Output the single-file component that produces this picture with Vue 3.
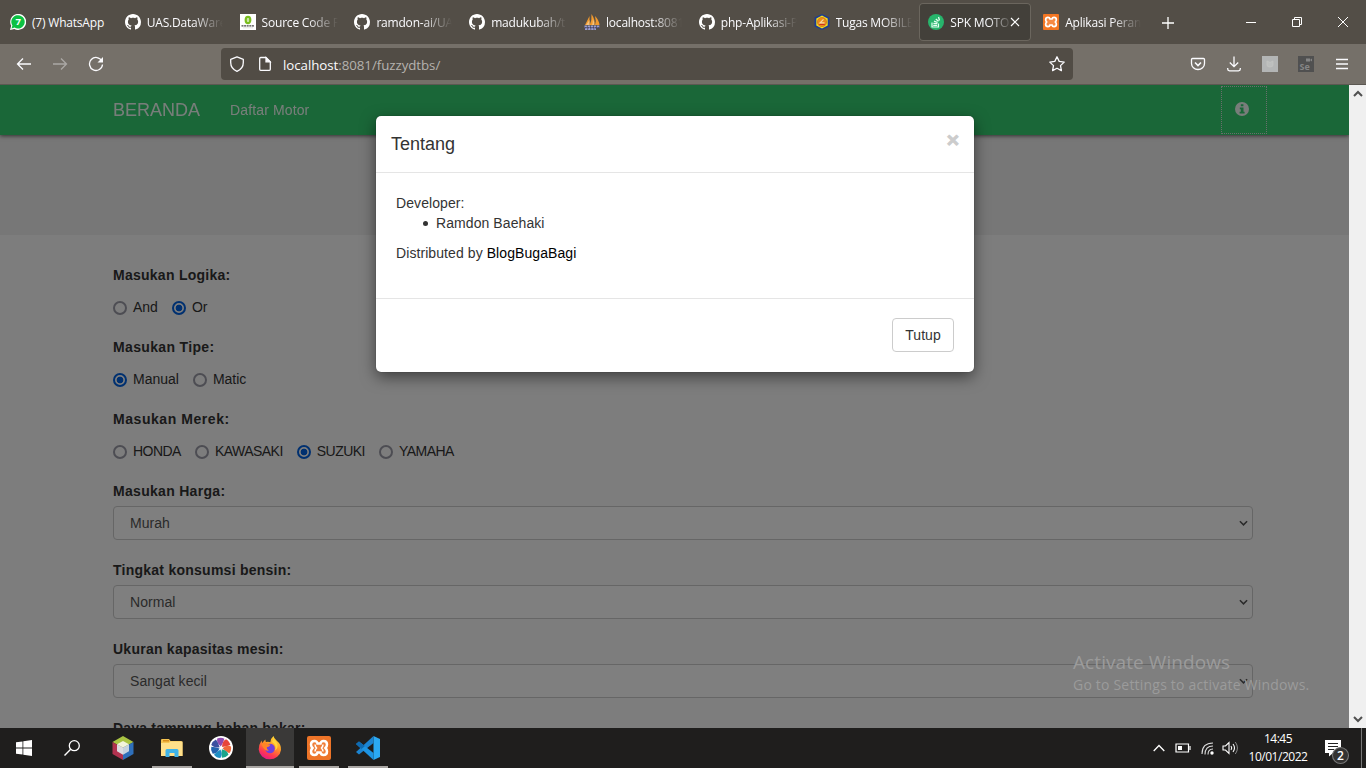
<script setup>
const tabs = [
  { t: '(7) WhatsApp', i: 'wa' },
  { t: 'UAS.DataWare', i: 'gh' },
  { t: 'Source Code F', i: 'src' },
  { t: 'ramdon-ai/UA', i: 'gh' },
  { t: 'madukubah/t', i: 'gh' },
  { t: 'localhost:8081', i: 'pma' },
  { t: 'php-Aplikasi-P', i: 'gh' },
  { t: 'Tugas MOBILE', i: 'uni' },
  { t: 'SPK MOTOR', i: 'spk', active: true },
  { t: 'Aplikasi Peran', i: 'xampp' }
]
const radios = [
  { label: 'Masukan Logika:', options: ['And', 'Or'], value: 'Or', ls: 0.26 },
  { label: 'Masukan Tipe:', options: ['Manual', 'Matic'], value: 'Manual', ls: 0.34 },
  { label: 'Masukan Merek:', options: ['HONDA', 'KAWASAKI', 'SUZUKI', 'YAMAHA'], value: 'SUZUKI', ls: 0.56, caps: true }
]
const selects = [
  { label: 'Masukan Harga:', value: 'Murah', ls: 0.3 },
  { label: 'Tingkat konsumsi bensin:', value: 'Normal', ls: 0.25 },
  { label: 'Ukuran kapasitas mesin:', value: 'Sangat kecil', ls: 0.25 },
  { label: 'Daya tampung bahan bakar:', value: 'Kecil', ls: 0.2 }
]
const blades = ['#8e4bb0', '#e8453c', '#f0683c', '#1ba58a', '#1d8fc4', '#2463ae', '#3c4fa0']
</script>

<template>
  <div class="screen">
    <header class="tabstrip">
      <div v-for="tab in tabs" :key="tab.t" class="tab" :class="{ active: tab.active }">
        <svg class="fav" viewBox="0 0 16 16">
          <g v-if="tab.i === 'wa'">
            <path d="M0 16l1.2-4.2A8 8 0 1 1 4.300 14.900z" fill="#fff" />
            <path d="M1.500 14.500l.9-3A6.700 6.700 0 1 1 4.600 13.600z" fill="#0cc143" />
            <text x="8.100" y="11.400" text-anchor="middle" font-size="9.500" font-weight="700" fill="#fff">7</text>
          </g>
          <path v-else-if="tab.i === 'gh'" fill="#fff" fill-rule="evenodd" d="M8 0C3.580 0 0 3.580 0 8c0 3.540 2.290 6.530 5.470 7.590.4.070.55-.17.55-.38 0-.19-.01-.82-.01-1.490-2.010.37-2.530-.49-2.690-.94-.09-.23-.48-.94-.82-1.130-.28-.15-.68-.52-.01-.53.63-.01 1.080.58 1.230.82.72 1.210 1.870.87 2.330.66.070-.52.28-.87.51-1.070-1.780-.2-3.640-.89-3.640-3.950 0-.87.31-1.590.82-2.150-.08-.2-.36-1.020.08-2.120 0 0 .67-.21 2.200.82.64-.18 1.320-.27 2-.27s1.360.09 2 .27c1.530-1.040 2.200-.82 2.200-.82.44 1.100.16 1.920.08 2.120.51.56.82 1.270.82 2.150 0 3.070-1.870 3.750-3.650 3.950.29.25.54.73.54 1.480 0 1.070-.01 1.930-.01 2.200 0 .21.15.46.55.38A8.010 8.010 0 0 0 16 8c0-4.420-3.580-8-8-8z" />
          <g v-else-if="tab.i === 'src'">
            <rect width="16" height="16" fill="#fff" />
            <ellipse cx="8" cy="6" rx="2.300" ry="3.200" fill="none" stroke="#79bd1e" stroke-width="2.200" />
            <path d="M8 4.500v3" stroke="#79bd1e" stroke-width=".8" />
            <path d="M1.500 11.800h13" stroke="#444" stroke-width="1.300" stroke-dasharray="2 .6" />
            <path d="M3 13.800h10" stroke="#ccc" stroke-width=".6" />
          </g>
          <g v-else-if="tab.i === 'pma'">
            <path d="M1 11L5.500 2v9zM5.700 11Q8 6 7.500 0q4 6 3 11zM11 11q1.500-4 0-9 4 4 4.500 9z" fill="#f29a2e" />
            <path d="M2 11l3.500-5v5zM8 11q1-2 .8-6 2 3 1.500 6z" fill="#f7c37c" />
            <path d="M.5 12.500h15M1 15h11" stroke="#9a9cd0" stroke-width="1.800" stroke-dasharray="2.400 .7" />
            <path d="M1 13.800h14" stroke="#34377c" stroke-width=".9" stroke-dasharray="1.500 1" />
          </g>
          <g v-else-if="tab.i === 'uni'">
            <path d="M8 0l7.500 3.500v9L8 16 .5 12.500v-9z" fill="#1c3c94" />
            <path d="M8 1.600l5.700 3v6.800l-5.700 3-5.700-3V4.600z" fill="#f4e01d" />
            <circle cx="8" cy="8" r="4.600" fill="#e98a1b" stroke="#d0701e" stroke-width=".7" />
            <path d="M9.500 5.300L6 8.800h4.500" fill="none" stroke="#f7d7a8" stroke-width="1.200" />
            <path d="M5.300 10.500h5.400" stroke="#d02e20" stroke-width="1" />
          </g>
          <g v-else-if="tab.i === 'spk'">
            <circle cx="8" cy="8" r="8" fill="#27b56c" />
            <path d="M4 8.500v4.500h6.500V9.500" fill="none" stroke="#e5fff1" stroke-width="1.200" />
            <path d="M5.200 11.300h4M5.400 9.400l4 .3M6 7.200l3.600 1.300M7.800 4.900l2.700 2.400M10.500 3l1 3.500" stroke="#e5fff1" stroke-width="1.300" />
          </g>
          <g v-else>
            <rect width="16" height="16" rx="1" fill="#f37623" />
            <path transform="scale(.667)" d="M7.500 5Q4 5 4 8.500q0 2 1.500 3.500Q4 13.500 4 15.500 4 19 7.500 19q2.500 0 3-2.500h3q.5 2.500 3 2.500 3.500 0 3.500-3.500 0-2-1.500-3.500Q20 10.500 20 8.500 20 5 16.500 5q-2.500 0-3 2.500h-3Q10 5 7.500 5z" fill="#f58a45" stroke="#fff" stroke-width="2.600" />
          </g>
        </svg>
        <span class="tabtext" :class="{ fade: tab.i !== 'wa' }">{{ tab.t }}</span>
        <svg v-if="tab.active" class="tabclose" viewBox="0 0 10 10"><path d="M1 1l8 8M9 1L1 9" stroke="#fff" stroke-width="1.200" /></svg>
      </div>
      <svg class="newtab" viewBox="0 0 12 12"><path d="M6 0v12M0 6h12" stroke="#fff" stroke-width="1.300" /></svg>
      <div class="wincontrols">
        <svg viewBox="0 0 10 10"><path d="M0 5.500h10" stroke="#fff" /></svg>
        <svg viewBox="0 0 10 10"><path d="M.5 2.500h7v7h-7zM2.500 2.500v-2h7v7h-2" fill="none" stroke="#fff" /></svg>
        <svg viewBox="0 0 10 10"><path d="M0 0l10 10M10 0L0 10" stroke="#fff" /></svg>
      </div>
    </header>

    <div class="toolbar">
      <div class="navbtns">
        <svg viewBox="0 0 16 16"><path d="M15 8H1.500M7 2.500L1.500 8 7 13.500" /></svg>
        <svg viewBox="0 0 16 16" class="dim"><path d="M1 8h13.500M9 2.500L14.500 8 9 13.500" /></svg>
        <svg viewBox="0 0 16 16"><path d="M13.800 5A6.500 6.500 0 1 0 14.500 8.500" /><path d="M15 1v5.500H9.500z" fill="#fbfbfe" stroke="none" /></svg>
      </div>
      <div class="urlbar">
        <svg viewBox="0 0 16 16"><path d="M8 .8l6.300 2.500v3.200C14.300 10.500 12 13.700 8 15.300 4 13.700 1.700 10.500 1.700 6.500V3.300z" stroke-linejoin="round" /></svg>
        <svg viewBox="0 0 16 16"><path d="M2.700 2.500q0-1 1-1H9l4.300 4.300v7.500q0 1-1 1H3.700q-1 0-1-1z" /><path d="M9 1.800v4h4z" fill="#fbfbfe" /></svg>
        <span class="url"><b>localhost</b>:8081/fuzzydtbs/</span>
        <svg class="star" viewBox="0 0 16 16"><path d="M8 .8l2.200 4.600 5 .7-3.700 3.500.9 5L8 12.200l-4.400 2.400.9-5L.8 6.100l5-.7z" stroke-linejoin="round" /></svg>
      </div>
      <div class="tools">
        <svg viewBox="0 0 16 16"><path d="M2.500 2.500h11q1 0 1 1v4a6.500 6 0 0 1-13 0v-4q0-1 1-1z" /><path d="M5 6.500l3 3 3-3" stroke-width="1.600" /></svg>
        <svg viewBox="0 0 16 16"><path d="M8 .5v10M3.800 6.500L8 10.700l4.200-4.200M1.700 12v1q0 1.800 1.800 1.800h9q1.800 0 1.800-1.800v-1" /></svg>
        <svg viewBox="0 0 16 16"><rect width="16" height="16" fill="#b3b5b5" stroke="none" /><path class="faint" d="M5 5v4q0 2 3 2t3-2V5L8 6.500z" /></svg>
        <svg viewBox="0 0 16 16"><rect width="16" height="16" fill="#505050" stroke="none" /><rect x="8" y="2.500" width="4" height="3" fill="#858585" class="plain" /><path d="M12 4l2-1.500v3z" fill="#858585" class="plain" /><text x="1.500" y="14" font-size="9" font-weight="700" fill="#858585" stroke="none">Se</text></svg>
        <svg viewBox="0 0 16 16"><path d="M2 3.500h12M2 8h12M2 12.500h12" /></svg>
      </div>
    </div>

    <main class="viewport">
      <div class="page">
        <nav class="navbar">
          <span class="brand">BERANDA</span>
          <span class="navlink">Daftar Motor</span>
          <span class="info">
            <svg viewBox="0 0 14 14"><circle cx="7" cy="7" r="7" fill="#fff" /><path d="M5.800 2.300h2.600v2H5.800zM4.800 5.500h3.700v4.300h1.100v1.700H4.600V9.800h1.200V7.200h-1z" fill="#34ce70" /></svg>
          </span>
        </nav>
        <div class="banner"></div>
        <form class="form">
          <div v-for="g in radios" :key="g.label" class="group">
            <div class="label" :style="{ letterSpacing: g.ls + 'px' }">{{ g.label }}</div>
            <div class="radios" :class="{ caps: g.caps }">
              <span v-for="o in g.options" :key="o" class="radio"><i :class="{ on: o === g.value }"></i>{{ o }}</span>
            </div>
          </div>
          <div v-for="s in selects" :key="s.label" class="group">
            <div class="label" :style="{ letterSpacing: s.ls + 'px' }">{{ s.label }}</div>
            <div class="select">{{ s.value }}
              <svg viewBox="0 0 10 6"><path d="M1 1l4 4 4-4" fill="none" stroke="#555" stroke-width="1.700" /></svg>
            </div>
          </div>
        </form>
      </div>
      <div class="scrollbar">
        <svg viewBox="0 0 10 7"><path d="M1 6l4-4 4 4" fill="none" stroke="#505050" stroke-width="2" /></svg>
        <svg viewBox="0 0 10 7"><path d="M1 1l4 4 4-4" fill="none" stroke="#505050" stroke-width="2" /></svg>
      </div>
      <div class="backdrop">
        <section class="modal">
          <div class="mhead"><span>Tentang</span><b class="mclose">×</b></div>
          <div class="mbody">
            <div>Developer:</div>
            <ul><li>Ramdon Baehaki</li></ul>
            <div>Distributed by <a>BlogBugaBagi</a></div>
          </div>
          <div class="mfoot"><span class="btn">Tutup</span></div>
        </section>
      </div>
      <div class="watermark">
        <div class="w1">Activate Windows</div>
        <div class="w2">Go to Settings to activate Windows.</div>
      </div>
    </main>

    <footer class="taskbar">
      <div class="app"><svg class="win" viewBox="0 0 16 16"><path d="M0 2.300l6.500-.9v6.200H0zM7.300 1.300L16 0v7.600H7.300zM0 8.400h6.500v6.200L0 13.700zM7.300 8.400H16V16l-8.700-1.300z" fill="#fff" /></svg></div>
      <div class="app find"><svg class="srch" viewBox="0 0 16 16"><circle cx="10.300" cy="5.700" r="5" fill="none" stroke="#fff" stroke-width="1.300" /><path d="M6.700 9.300L.5 15.500" stroke="#fff" stroke-width="1.400" /></svg></div>
      <div class="app wide"><svg viewBox="0 0 24 24">
        <path d="M12 0L22.500 6 12 12 1.500 6z" fill="#a9c443" /><path d="M1.500 6L12 12v12L1.500 18z" fill="#b0324f" /><path d="M22.500 6L12 12v12l10.500-6z" fill="#2e6fba" />
        <path d="M12 5l6 3.200-6 3.300-6-3.300z" fill="#f2f4dc" /><path d="M6 8.200l6 3.300v7.200l-6-3.500z" fill="#dcdde2" /><path d="M18 8.200l-6 3.300v7.200l6-3.500z" fill="#c7d3df" />
      </svg></div>
      <div class="app run"><svg viewBox="0 0 24 24">
        <path d="M1 4q0-1 1-1h7l1.500 2H21q1.500 0 1.500 1.500V20H1z" fill="#f5c451" /><path d="M3 4h6v1.500H3z" fill="#d98d1b" /><path d="M1 7h8l1.500-1.500h12V20H1z" fill="#ffe08a" />
        <path d="M5.500 21v-6.500q0-1.500 1.500-1.500h10q1.500 0 1.500 1.500V21h-4v-4h-5v4z" fill="#3fb3e8" />
      </svg></div>
      <div class="app"><svg viewBox="0 0 24 24">
        <circle cx="12" cy="12" r="12" fill="#fff" />
        <path v-for="(c, n) in blades" :key="c" d="M11.800 10.500Q7.300 7 8.200 2.600q3.800-1.600 7.200.2Q14.500 6.500 11.800 10.500z" :fill="c" :transform="`rotate(${n * 51.43} 12 12)`" />
      </svg></div>
      <div class="app run focus"><svg viewBox="0 0 24 24">
        <defs>
          <linearGradient id="fx" x1=".8" y1="0" x2=".3" y2="1"><stop offset="0" stop-color="#ffe33a" /><stop offset=".4" stop-color="#ff9b24" /><stop offset=".75" stop-color="#ff3a4e" /><stop offset="1" stop-color="#e3188a" /></linearGradient>
        </defs>
        <path d="M15.500 0q.5 2.500 3 4.500 5 4 4.500 9.500A11.200 10.500 0 0 1 .7 13.500Q.5 9 3.500 4.500L4.200 7 7.300 3.500l.5 2.500q2.500-.7 4.500.2Q13 2 15.500 0z" fill="url(#fx)" />
        <circle cx="12" cy="12.500" r="4.800" fill="#7040dc" />
        <path d="M3.500 8q2.500-2 5-1 1.500 1.500 4 1.700-1 2.300-3.700 2.500-.3 2.500 2 3.300-3.300.8-5.300-2.500Q4 10 3.500 8z" fill="#ff8526" />
        <path d="M14 6q5 3 3 8.500 2-1 2.500-3.500.5-5-4-8z" fill="#ffd53a" />
      </svg></div>
      <div class="app run"><svg viewBox="0 0 24 24">
        <rect width="24" height="24" rx="2" fill="#ed7428" />
        <path d="M7.500 5Q4 5 4 8.500q0 2 1.500 3.500Q4 13.500 4 15.500 4 19 7.500 19q2.500 0 3-2.500h3q.5 2.500 3 2.500 3.500 0 3.500-3.500 0-2-1.500-3.500Q20 10.500 20 8.500 20 5 16.500 5q-2.500 0-3 2.500h-3Q10 5 7.500 5z" fill="#f0803c" stroke="#fff" stroke-width="2.500" />
        <path d="M8 8.500q0 2 1.500 3.500Q8 13.500 8 15.500M16 8.500q0 2-1.500 3.500 1.500 1.500 1.500 3.500" fill="none" stroke="#fff" stroke-width="1.500" />
      </svg></div>
      <div class="app run"><svg viewBox="0 0 24 24">
        <path d="M17.500 0L24 3v18l-6.500 3z" fill="#2ba9f3" /><path d="M17.500 0v7L3 18.500 0 16z" fill="#1c84d1" /><path d="M0 8l3-2.500L17.500 17v7z" fill="#1d94e2" /><path d="M0 8l3-2.500 6 4.500-3.500 3z" fill="#0e6ab1" />
      </svg></div>
      <div class="tray">
        <svg class="chev" viewBox="0 0 12 8"><path d="M.7 7L6 1.500 11.300 7" fill="none" stroke="#fff" stroke-width="1.300" /></svg>
        <svg class="bat" viewBox="0 0 16 10"><path d="M1 1h12.500v8H1z" fill="none" stroke="#fff" stroke-width="1.200" /><path d="M3 3h4v4H3z" fill="#fff" /><path d="M15 3v4" stroke="#fff" stroke-width="1.200" /></svg>
        <svg class="wifi" viewBox="0 0 13 13"><g fill="none" stroke="#ddd" stroke-width="1.100"><path d="M1 12Q1 1 12 1M4 12.500Q4 4 12 4M7 12.500Q7 7 12 7" /></g><circle cx="11" cy="11" r="1.700" fill="#fff" /></svg>
        <svg class="vol" viewBox="0 0 17 14"><path d="M1 5h2.500L7 1.500v11L3.500 9H1zM9 5q1.500 2 0 4M11 3q3 4 0 8" fill="none" stroke="#fff" stroke-width="1.100" /><path d="M13.300 1q4.300 6 0 12" fill="none" stroke="#888" /></svg>
        <div class="clock"><div>14:45</div><div>10/01/2022</div></div>
        <div class="notif">
          <svg viewBox="0 0 26 26"><path d="M1 1h16v13H9l-4 3.500V14H1z" fill="#fff" /><path d="M4 4.500h10M4 7.500h10M4 10.500h6" stroke="#222" /><circle cx="16.500" cy="16.500" r="8" fill="#343332" stroke="#777" stroke-width="1.100" /><text x="16.500" y="20.700" text-anchor="middle" font-size="12" fill="#fff" font-weight="600">2</text></svg>
        </div>
        <div class="peek"></div>
      </div>
    </footer>
  </div>
</template>

<style>
body { margin: 0; overflow: hidden; }
</style>

<style scoped>
* { box-sizing: border-box; }
svg { display: block; flex: none; }
.screen { width: 1366px; height: 768px; display: flex; flex-direction: column; overflow: hidden; font-family: "Open Sans", "Noto Sans", sans-serif; }
.tabstrip { height: 44px; background: #534e47; display: flex; align-items: center; flex: none; }
.tab { width: 114.8px; height: 38px; flex: none; display: flex; align-items: center; padding-left: 10px; }
.tab.active { background: #43403a; box-shadow: inset 0 0 0 1px #6b665e; border-radius: 4px; margin: 0 1.8px 0 .6px; width: 112.4px; padding-left: 9.4px; }
.fav { width: 16px; height: 16px; margin-right: 6px; }
.tabtext { font-size: 12px; line-height: 18px; letter-spacing: -.2px; color: #fbfbfe; white-space: nowrap; margin-top: 2px; }
.tabtext.fade { -webkit-mask-image: linear-gradient(90deg, #000 46px, transparent 76px); mask-image: linear-gradient(90deg, #000 46px, transparent 76px); }
.active .tabtext.fade { width: 59px; flex: none; -webkit-mask-image: linear-gradient(90deg, #000 38px, transparent 62px); mask-image: linear-gradient(90deg, #000 38px, transparent 62px); }
.tabclose { width: 10px; height: 10px; margin-left: 1px; }
.newtab { width: 12px; height: 12px; margin-left: 14px; margin-top: 2px; }
.wincontrols { margin-left: auto; display: flex; gap: 36px; padding-right: 18px; }
.wincontrols svg { width: 10px; height: 10px; }
.toolbar { height: 41px; flex: none; background: #757069; border-bottom: 1px solid #5c5852; display: flex; align-items: center; padding: 0 16px; }
.toolbar svg { width: 16px; height: 16px; fill: none; stroke: #fbfbfe; stroke-width: 1.3; }
.toolbar svg.dim { opacity: .4; }
.toolbar .faint { fill: #bcbebd; stroke: #c3c4c2; stroke-width: .8; }
.toolbar .plain { stroke: none; }
.navbtns { display: flex; gap: 20px; width: 205px; }
.urlbar { width: 852px; height: 32px; border-radius: 4px; background: #514c45; display: flex; align-items: center; padding: 0 8px; gap: 12px; }
.url { font-size: 13.3px; color: #b5b2ae; flex: 1; margin-left: -2px; padding-top: 1px; letter-spacing: -.05px; }
.url b { font-weight: 400; color: #fbfbfe; }
.tools { margin-left: auto; display: flex; gap: 20px; }
.viewport { height: 643px; flex: none; display: flex; position: relative; overflow: hidden; font-family: "Liberation Sans", Arial, sans-serif; font-size: 14px; line-height: 20px; color: #333; }
.page { width: 1349px; background: #fafafa; overflow: hidden; }
.navbar { height: 50px; background: #34ce70; box-shadow: 0 1px 4px rgba(0,0,0,.6); position: relative; display: flex; align-items: center; padding-left: 113px; color: #fff; }
.navbar span { opacity: .93; }
.brand { font-size: 18px; }
.navlink { margin-left: 30px; letter-spacing: .13px; }
.navbar .info { margin-left: auto; margin-right: 82px; width: 46px; height: 48px; border: 1px dotted #e0e0e0; display: flex; align-items: center; justify-content: center; padding-right: 4px; padding-bottom: 3px; }
.info svg { width: 14px; height: 14px; }
.banner { height: 100px; background: #eee; }
.form { margin: 0; padding: 30px 96px 0 113px; }
.group { margin-bottom: 20px; }
.label { font-weight: 700; margin-bottom: 5px; height: 20px; }
.radios { display: flex; padding-top: 7px; gap: 14px; }
.radios.caps { letter-spacing: -.53px; }
.radio { display: flex; }
.radio i { width: 14px; height: 14px; border: 2px solid #9a9aa6; border-radius: 50%; margin: 4px 6px 0 0; flex: none; }
.radio i.on { border-color: #0061e0; background: radial-gradient(circle, #0061e0 3px, transparent 3.7px); }
.select { height: 34px; border: 1px solid #ccc; border-radius: 4px; background: #fff; padding: 6px 4px 6px 16px; display: flex; justify-content: space-between; align-items: center; color: #555; letter-spacing: .05px; }
.select svg { width: 9px; height: 6px; }
.scrollbar { width: 17px; background: #f0f0f0; display: flex; flex-direction: column; justify-content: space-between; align-items: center; padding: 5px 0; }
.scrollbar svg { width: 10px; height: 7px; }
.backdrop { position: absolute; left: 0; top: 0; width: 1349px; height: 643px; background: rgba(0,0,0,.5); padding: 31px 0 0 376px; }
.modal { width: 598px; height: 256px; background: #fff; border-radius: 5px; box-shadow: 0 5px 15px rgba(0,0,0,.5), 0 0 1px rgba(0,0,0,.5); }
.mhead { height: 57px; border-bottom: 1px solid #e5e5e5; padding: 15px; font-size: 18px; line-height: 26px; display: flex; justify-content: space-between; }
.mclose { font-size: 21px; line-height: 17px; color: #ccc; -webkit-text-stroke: 1px #ccc; }
.mbody { height: 126px; border-bottom: 1px solid #e5e5e5; padding: 20px; letter-spacing: .08px; }
.mbody ul { margin: 0 0 10px; padding-left: 27px; list-style: none; }
.mbody li { display: flex; align-items: center; height: 20px; }
.mbody li::before { content: ""; width: 5px; height: 5px; border-radius: 50%; background: #333; margin: 1px 8px 0 0; }
.mbody a { color: #000; }
.mfoot { padding: 19px 20px; display: flex; justify-content: flex-end; }
.btn { border: 1px solid #ccc; border-radius: 4px; width: 62px; height: 34px; line-height: 32px; text-align: center; letter-spacing: .08px; }
.watermark { position: absolute; left: 1073px; top: 565px; color: #9b9b9b; font-family: "Open Sans", sans-serif; white-space: nowrap; }
.w1 { font-size: 19px; line-height: 24px; letter-spacing: .08px; }
.w2 { font-size: 14px; line-height: 22px; letter-spacing: .2px; }
.taskbar { height: 40px; flex: none; background: #1f1e1d; display: flex; }
.app { width: 49px; height: 40px; flex: none; display: flex; align-items: center; justify-content: center; }
.app:first-child, .app.find { width: 48px; }
.app.wide { width: 51.5px; padding-left: 3px; }
.app svg { width: 24px; height: 24px; }
.app svg.win, .app svg.srch { width: 16px; height: 16px; }
.app.run { background: linear-gradient(#aaa7a4, #aaa7a4) center bottom / 40px 2px no-repeat; }
.app.focus { width: 48px; margin: 0 .5px; background: linear-gradient(#aaa7a4, #aaa7a4) center bottom / 48px 2px no-repeat, #3a3938; }
.tray { margin-left: auto; display: flex; align-items: center; color: #fff; }
.chev { width: 12px; height: 8px; margin-right: 10px; }
.bat { width: 16px; height: 10px; margin-right: 10px; }
.wifi { width: 13px; height: 13px; margin-right: 8px; }
.vol { width: 17px; height: 14px; margin-right: 9px; }
.clock { width: 60px; text-align: center; font-size: 12px; line-height: 18px; letter-spacing: -.47px; }
.notif { margin-left: 16px; }
.notif svg { width: 26px; height: 26px; margin-top: 8px; }
.peek { width: 1px; height: 40px; background: #777; margin-left: 11px; margin-right: 4px; }
</style>
